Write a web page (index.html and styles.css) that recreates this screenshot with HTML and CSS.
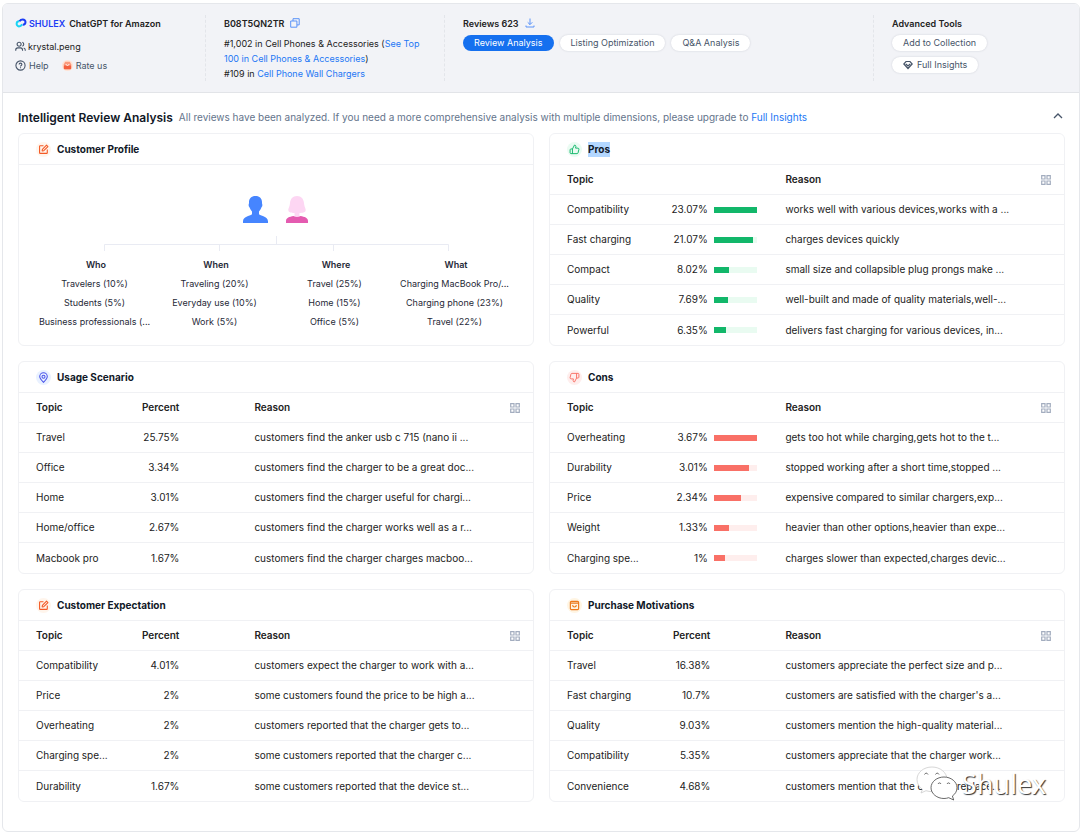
FILE: index.html
```html
<!DOCTYPE html>
<html lang="en">
<head>
<meta charset="utf-8">
<title>ChatGPT for Amazon</title>
<link rel="stylesheet" href="styles.css">
</head>
<body>
<svg class="defs" aria-hidden="true">
  <symbol id="edit" viewBox="0 0 16 16"><path d="M8 2.5H3.2a.9.9 0 0 0-.9.9v9.4c0 .5.4.9.9.9h9.4c.5 0 .9-.4.9-.9V8M6 10.2l.4-2.5 6-6 2 2-6 6z" fill="none" stroke="currentColor" stroke-width="1.6" stroke-linejoin="round"/></symbol>
  <symbol id="up" viewBox="0 0 16 16"><path d="M5 7.2 8 1.5c1.3 0 2 .9 2 2L9.6 6H13c1 0 1.6.9 1.4 1.8l-1.2 5c-.2.8-.8 1.2-1.5 1.2H2.9c-.7 0-1.3-.5-1.3-1.3V8.5c0-.8.6-1.3 1.3-1.3zM5 7.2V14" fill="none" stroke="currentColor" stroke-width="1.4" stroke-linejoin="round"/></symbol>
  <symbol id="grid" viewBox="0 0 10 10"><path d="M.7.7h3.300v3.300h-3.300zM6 .7h3.300v3.300h-3.300zM.7 6h3.300v3.300h-3.300zM6 6h3.300v3.300h-3.300z" fill="none" stroke="currentColor" stroke-width="1.200"/></symbol>
</svg>
<main class="panel">
  <header class="top">
    <section class="col">
      <div class="brand">
        <svg class="logo" viewBox="0 0 12 10"><path d="M4.500 3.200A2.600 2.600 0 1 0 4 8.400c1.800 0 2.500-1 3.200-2" fill="none" stroke="#19d3f5" stroke-width="2"/><path d="M4.500 3.300C5.300 2 6.300 1.400 7.800 1.400a2.700 2.700 0 1 1 0 5.400" fill="none" stroke="#1c3cf5" stroke-width="2"/></svg>
        <span class="name">SHULEX</span><strong>ChatGPT for Amazon</strong>
      </div>
      <div class="user">
        <svg viewBox="0 0 12 12" fill="none" stroke="#475569" stroke-width="1.200"><circle cx="4.500" cy="3.500" r="2.200"/><path d="M.8 10.500V9.800c0-1.500 1-2.300 2.200-2.300h3c1.300 0 2.200.8 2.200 2.300v.7M8 1.400a2.200 2.200 0 0 1 0 4.200M9.500 7.600c1 .3 1.700 1 1.700 2.200v.7"/></svg>krystal.peng
      </div>
      <nav class="links">
        <a href="#"><svg viewBox="0 0 12 12" fill="none" stroke="#475569" stroke-width="1.200"><circle cx="6" cy="6" r="5"/><path d="M4.500 4.800C4.500 3 7.500 3 7.500 4.800 7.500 6 6 5.900 6 7.200M6 8v1"/></svg>Help</a>
        <a href="#" class="rate"><svg viewBox="0 0 12 12"><circle cx="6" cy="6" r="6" fill="#ffe3d5"/><path d="M2 4.500 3.500 2h5L10 4.500V9a1 1 0 0 1-1 1H3a1 1 0 0 1-1-1z" fill="#fb9a7c"/><path d="M2 6h8v3a1 1 0 0 1-1 1H3a1 1 0 0 1-1-1z" fill="#f4613f"/><path d="M4.300 4.500c.3 2 3.100 2 3.400 0" fill="none" stroke="#fff"/></svg>Rate us</a>
      </nav>
    </section>
    <section class="col">
      <div class="heading">B08T5QN2TR <button class="mini" aria-label="Copy"><svg viewBox="0 0 10 10" fill="none" stroke="#5b93f8"><path d="M.7 3h6.200v6.200H.7zM3 3V.7h6.200v6.200H7"/></svg></button></div>
      <p class="rank">#1,002 in Cell Phones &amp; Accessories (<a href="#">See Top 100 in Cell Phones &amp; Accessories</a>)<br>#109 in <a href="#">Cell Phone Wall Chargers</a></p>
    </section>
    <section class="col">
      <div class="heading">Reviews 623 <button class="mini" aria-label="Download"><svg viewBox="0 0 10 10" fill="none" stroke="#5b93f8"><path d="M5 .5v6M2.700 4.300 5 6.600l2.300-2.300M1 7.500V9h8V7.500"/></svg></button></div>
      <div class="pills"><button class="pill on">Review Analysis</button><button class="pill">Listing Optimization</button><button class="pill">Q&amp;A Analysis</button></div>
    </section>
    <section class="col">
      <div class="heading">Advanced Tools</div>
      <div class="pills stack"><button class="pill">Add to Collection</button><button class="pill"><svg viewBox="0 0 10 10" fill="none" stroke="#475569"><path d="M3 1.500h4l2.200 2.500L5 8.500.8 4zM2.800 4 5 6l2.200-2" stroke-width="1.200"/></svg>Full Insights</button></div>
    </section>
  </header>

  <div class="title">
    <h1>Intelligent Review Analysis</h1>
    <p>All reviews have been analyzed. If you need a more comprehensive analysis with multiple dimensions, please upgrade to <a href="#">Full Insights</a></p>
    <button class="mini fold" aria-label="Collapse"><svg viewBox="0 0 10 10" fill="none" stroke="#475569" stroke-width="1.300"><path d="M1 6 5 2l4 4"/></svg></button>
  </div>

  <div class="cards">
    <section class="card">
      <h2><span class="badge orange"><svg><use href="#edit"/></svg></span>Customer Profile</h2>
      <div class="profile">
        <div class="people">
          <svg class="man" viewBox="0 0 25 27"><path d="M12.500 0C17 0 19.300 3 19 7c0 1 .6 1.300.3 2.800-.2 1-.7 1.200-1.100 2.200-.4 1.300-1.200 2.500-2.200 3.500v2.700c2.500 2 9 2 9 7.300V27H0v-1.500c0-5.300 6.500-5.300 9-7.300v-2.700c-1-1-1.800-2.200-2.200-3.500-.4-1-.9-1.200-1.100-2.200C5.400 8.300 6 8 6 7c-.3-4 2-7 6.500-7z" fill="#4685ff"/></svg>
          <svg class="woman" viewBox="0 0 22 27"><path d="M11 0c4.500 0 6.500 3 7 7 .3 4 1.700 5 1.700 7 0 2.200-2.700 3-6.200 3v4h-5v-4c-3.500 0-6.200-.8-6.200-3 0-2 1.400-3 1.700-7 .5-4 2.500-7 7-7z" fill="#fdd6f3"/><path d="M0 27v-2c0-3.500 3.500-4 7.500-5 2 1.300 5 1.300 7 0 4 1 7.500 1.500 7.500 5v2z" fill="#e45bb0"/></svg>
        </div>
        <svg class="tree" viewBox="0 0 345 15" fill="none" stroke="#e9ebf3"><path d="M172.500 0v8.500M.5 15V8.500h344V15M115.500 8.500V15M229.500 8.500V15"/></svg>
        <div class="groups">
          <ul><li class="gh">Who</li><li>Travelers (10%)</li><li>Students (5%)</li><li>Business professionals (...</li></ul>
          <ul><li class="gh">When</li><li>Traveling (20%)</li><li>Everyday use (10%)</li><li>Work (5%)</li></ul>
          <ul><li class="gh">Where</li><li>Travel (25%)</li><li>Home (15%)</li><li>Office (5%)</li></ul>
          <ul><li class="gh">What</li><li>Charging MacBook Pro/...</li><li>Charging phone (23%)</li><li>Travel (22%)</li></ul>
        </div>
      </div>
    </section>

    <section class="card">
      <h2><span class="badge green"><svg><use href="#up"/></svg></span><mark>Pros</mark></h2>
      <table class="bars">
        <thead><tr><th class="c1">Topic</th><th class="c2"></th><th>Reason</th><th class="c4"><button class="mini" aria-label="View all"><svg><use href="#grid"/></svg></button></th></tr></thead>
        <tbody>
        <tr><td>Compatibility</td><td><div class="meter"><span>23.07%</span><i><b style="width:100%"></b></i></div></td><td colspan="2">works well with various devices,works with a ...</td></tr>
        <tr><td>Fast charging</td><td><div class="meter"><span>21.07%</span><i><b style="width:91%"></b></i></div></td><td colspan="2">charges devices quickly</td></tr>
        <tr><td>Compact</td><td><div class="meter"><span>8.02%</span><i><b style="width:35%"></b></i></div></td><td colspan="2">small size and collapsible plug prongs make ...</td></tr>
        <tr><td>Quality</td><td><div class="meter"><span>7.69%</span><i><b style="width:33%"></b></i></div></td><td colspan="2">well-built and made of quality materials,well-...</td></tr>
        <tr><td>Powerful</td><td><div class="meter"><span>6.35%</span><i><b style="width:28%"></b></i></div></td><td colspan="2">delivers fast charging for various devices, in...</td></tr>
        </tbody>
      </table>
    </section>

    <section class="card">
      <h2><span class="badge blue"><svg viewBox="0 0 16 16" fill="none" stroke="currentColor" stroke-width="1.500"><path d="M8 15C4.500 11.800 2.500 9.500 2.500 6.700a5.500 5.500 0 0 1 11 0C13.500 9.500 11.500 11.800 8 15z"/><circle cx="8" cy="6.800" r="2.200"/></svg></span>Usage Scenario</h2>
      <table>
        <thead><tr><th class="c1">Topic</th><th class="c2 num">Percent</th><th>Reason</th><th class="c4"><button class="mini" aria-label="View all"><svg><use href="#grid"/></svg></button></th></tr></thead>
        <tbody>
        <tr><td>Travel</td><td class="num">25.75%</td><td colspan="2">customers find the anker usb c 715 (nano ii ...</td></tr>
        <tr><td>Office</td><td class="num">3.34%</td><td colspan="2">customers find the charger to be a great doc...</td></tr>
        <tr><td>Home</td><td class="num">3.01%</td><td colspan="2">customers find the charger useful for chargi...</td></tr>
        <tr><td>Home/office</td><td class="num">2.67%</td><td colspan="2">customers find the charger works well as a r...</td></tr>
        <tr><td>Macbook pro</td><td class="num">1.67%</td><td colspan="2">customers find the charger charges macboo...</td></tr>
        </tbody>
      </table>
    </section>

    <section class="card">
      <h2><span class="badge red"><svg class="flip"><use href="#up"/></svg></span>Cons</h2>
      <table class="bars bad">
        <thead><tr><th class="c1">Topic</th><th class="c2"></th><th>Reason</th><th class="c4"><button class="mini" aria-label="View all"><svg><use href="#grid"/></svg></button></th></tr></thead>
        <tbody>
        <tr><td>Overheating</td><td><div class="meter"><span>3.67%</span><i><b style="width:100%"></b></i></div></td><td colspan="2">gets too hot while charging,gets hot to the t...</td></tr>
        <tr><td>Durability</td><td><div class="meter"><span>3.01%</span><i><b style="width:82%"></b></i></div></td><td colspan="2">stopped working after a short time,stopped ...</td></tr>
        <tr><td>Price</td><td><div class="meter"><span>2.34%</span><i><b style="width:64%"></b></i></div></td><td colspan="2">expensive compared to similar chargers,exp...</td></tr>
        <tr><td>Weight</td><td><div class="meter"><span>1.33%</span><i><b style="width:36%"></b></i></div></td><td colspan="2">heavier than other options,heavier than expe...</td></tr>
        <tr><td>Charging spe...</td><td><div class="meter"><span>1%</span><i><b style="width:27%"></b></i></div></td><td colspan="2">charges slower than expected,charges devic...</td></tr>
        </tbody>
      </table>
    </section>

    <section class="card">
      <h2><span class="badge orange"><svg><use href="#edit"/></svg></span>Customer Expectation</h2>
      <table>
        <thead><tr><th class="c1">Topic</th><th class="c2 num">Percent</th><th>Reason</th><th class="c4"><button class="mini" aria-label="View all"><svg><use href="#grid"/></svg></button></th></tr></thead>
        <tbody>
        <tr><td>Compatibility</td><td class="num">4.01%</td><td colspan="2">customers expect the charger to work with a...</td></tr>
        <tr><td>Price</td><td class="num">2%</td><td colspan="2">some customers found the price to be high a...</td></tr>
        <tr><td>Overheating</td><td class="num">2%</td><td colspan="2">customers reported that the charger gets to...</td></tr>
        <tr><td>Charging spe...</td><td class="num">2%</td><td colspan="2">some customers reported that the charger c...</td></tr>
        <tr><td>Durability</td><td class="num">1.67%</td><td colspan="2">some customers reported that the device st...</td></tr>
        </tbody>
      </table>
    </section>

    <section class="card">
      <h2><span class="badge amber"><svg viewBox="0 0 16 16" fill="none" stroke="currentColor" stroke-width="1.700"><rect x="2" y="2" width="12" height="12" rx="1.500"/><path d="M2 4.500h12M5.200 7.500c.6 3.500 5 3.500 5.600 0"/></svg></span>Purchase Motivations</h2>
      <table>
        <thead><tr><th class="c1">Topic</th><th class="c2 num">Percent</th><th>Reason</th><th class="c4"><button class="mini" aria-label="View all"><svg><use href="#grid"/></svg></button></th></tr></thead>
        <tbody>
        <tr><td>Travel</td><td class="num">16.38%</td><td colspan="2">customers appreciate the perfect size and p...</td></tr>
        <tr><td>Fast charging</td><td class="num">10.7%</td><td colspan="2">customers are satisfied with the charger's a...</td></tr>
        <tr><td>Quality</td><td class="num">9.03%</td><td colspan="2">customers mention the high-quality material...</td></tr>
        <tr><td>Compatibility</td><td class="num">5.35%</td><td colspan="2">customers appreciate that the charger work...</td></tr>
        <tr><td>Convenience</td><td class="num">4.68%</td><td colspan="2">customers mention that the charger replace...</td></tr>
        </tbody>
      </table>
    </section>
  </div>
  <div class="watermark">
    <svg viewBox="0 0 42 36" fill="#fff" stroke="#444" stroke-width=".8"><path d="M16 1C7.500 1 1 6.500 1 13.500c0 4 2 7.500 5.500 9.800L5 27l5-2.300c2 .6 4 .9 6 .9 8.300 0 15-5.300 15-12.100S24.300 1 16 1z" stroke="#ccc"/><path d="M28 11c-7 0-13 4.700-13 10.700S21 32.500 28 32.500c1.600 0 3.200-.3 4.700-.8l5 2.300-1.300-4c3-2 4.600-5 4.600-8.300C41 15.700 35 11 28 11z"/><path d="M8.500 8.500c.8-1.800 2.700-1.800 3.500 0M19.500 8.500c.8-1.800 2.700-1.800 3.500 0M22 18c.7-1.500 2.300-1.500 3 0M31 18c.7-1.500 2.300-1.500 3 0" fill="none"/></svg>
    <span>Shulex</span>
  </div>
</main>
</body>
</html>
```
FILE: styles.css
```css
* { box-sizing: border-box; }
body { margin: 0; padding: 3px 0 0 2px; background: #fff; color: #222; font: 10px/15px Inter, "Liberation Sans", sans-serif; }
.defs { display: none; }
h1, h2, p, ul { margin: 0; padding: 0; }
a { color: #2377f5; text-decoration: none; }
button { font: inherit; color: inherit; cursor: pointer; }
svg { display: block; flex: none; }
.panel { position: relative; min-height: calc(100vh - 3px); border: 1px solid #e5e7eb; border-radius: 6px; overflow: hidden; }

.top { display: grid; grid-template-columns: 202fr 239fr 429fr 206fr; padding: 11px 0; background: #f2f3f7; border-bottom: 1px solid #e2e4e8; font-size: 9px; }
.col { min-height: 66px; padding-left: 18px; border-left: 1px dashed #e3e5ea; }
.col:first-child { padding-left: 12px; border-left: 0; }
.heading { display: flex; align-items: center; gap: 6px; height: 16px; font-weight: 600; }
.mini { display: inline-flex; padding: 0; border: 0; background: none; }
.mini svg { width: 10px; height: 10px; }
.brand { display: flex; align-items: center; height: 16px; }
.logo { width: 12px; height: 10px; margin-right: 2px; }
.name { margin-right: 4px; color: #1c3cf5; font-weight: 600; }
.brand strong { font-weight: 600; }
.user, .links, .links a { display: flex; align-items: center; }
.user { gap: 2px; margin-top: 8px; }
.user svg, .links svg { width: 11px; height: 11px; }
.links { gap: 13px; margin-top: 4px; }
.links a { gap: 3px; color: #475569; }
.rate { gap: 4px; }
.rank { max-width: 200px; margin-top: 5px; }
.pills { display: flex; gap: 6px; margin-top: 4px; }
.stack { flex-direction: column; align-items: flex-start; }
.pill { display: flex; align-items: center; gap: 4px; height: 16px; padding: 0 11px; border: 0; border-radius: 8px; background: #fff; color: #475569; line-height: 16px; box-shadow: 0 0 2px #c9ccd5; white-space: nowrap; }
.pill svg { width: 10px; height: 10px; }
.on { background: #1570ef; color: #fff; box-shadow: none; }

.title { display: flex; align-items: center; gap: 6px; height: 40px; padding: 8px 16px 0 15px; }
.title h1 { color: #111827; font-size: 12px; font-weight: 600; }
.title p { color: #64748b; }
.fold { margin-left: auto; }

.cards { display: grid; grid-template-columns: 1fr 1fr; gap: 15px; padding: 0 14px 28px 15px; }
.card { border: 1px solid #f0f1f4; border-radius: 6px; min-width: 0; }
.card h2 { display: flex; align-items: center; gap: 6px; height: 31px; padding-left: 17px; border-bottom: 1px solid #f0f1f4; color: #111827; font-size: 10px; font-weight: 700; }
.badge { display: flex; align-items: center; justify-content: center; width: 15px; height: 15px; border-radius: 50%; }
.badge svg { width: 11px; height: 11px; }
.orange { color: #f45a26; background: #fff5ec; }
.amber { color: #ec7a1c; background: #fff5e3; }
.green { color: #12b76a; background: #eafbf2; }
.blue { color: #4b55ea; background: #e9f1ff; }
.red { color: #f97066; background: #feeeed; }
.flip { transform: rotate(180deg); }
mark { background: #b3d7ff; color: inherit; line-height: 15px; }

table { width: 100%; border-collapse: separate; border-spacing: 0; table-layout: fixed; }
th, td { height: 30px; padding: 0; border-bottom: 1px solid #f0f1f4; text-align: left; vertical-align: middle; white-space: nowrap; }
tbody tr:last-child td { border-bottom: 0; }
th { font-weight: 600; }
th:first-child, td:first-child { padding-left: 17px; }
.c1 { width: 19.8%; }
.c2 { width: 26%; }
.c4 { width: 23px; }
.c4 .mini { display: flex; color: #a3adbf; }
.num { padding-right: 75px; text-align: right; }
.meter { display: flex; align-items: center; gap: 6px; }
.meter span { width: 56px; text-align: right; }
.meter i { width: 43px; height: 6px; background: #e9fbf1; }
.meter b { display: block; height: 6px; background: #12b76a; }
.bad i { background: #feeeed; }
.bad b { background: #f97066; }

.profile { display: flex; flex-direction: column; align-items: center; padding-top: 31px; color: #1f2937; font-size: 9px; }
.people { display: flex; gap: 18px; padding-right: 2px; }
.man { width: 25px; height: 27px; }
.woman { width: 22px; height: 27px; }
.tree { width: 345px; height: 15px; margin-top: 13px; }
.groups { display: grid; grid-template-columns: repeat(4, 120px); margin-top: 4px; }
.groups ul { list-style: none; text-align: center; line-height: 19px; white-space: nowrap; }
.groups li { padding-right: 3px; }
.groups .gh { padding-right: 0; font-weight: 600; }

.watermark { position: absolute; right: 33px; bottom: 29px; display: flex; align-items: center; gap: 4px; color: #fff; font: 27px/36px "Noto Sans", sans-serif; text-shadow: 1px 1px 1px #333; }
.watermark svg { width: 42px; height: 36px; }
```
